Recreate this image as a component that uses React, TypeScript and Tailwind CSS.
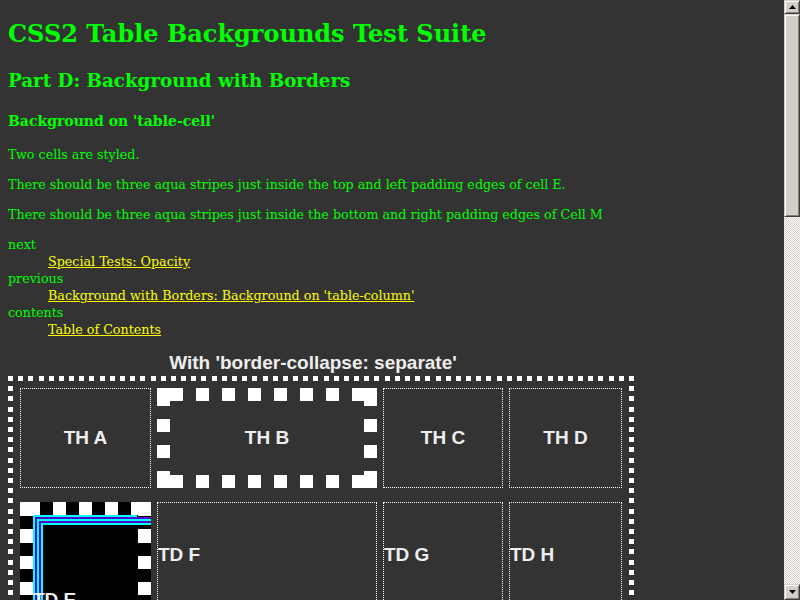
import React from "react";

const serif = "font-['DejaVu_Serif',serif]";
const sans = "font-['Liberation_Sans',Arial,sans-serif]";

// squares along the edges of the outer table border
function SquareDots({ w, h }: { w: number; h: number }) {
  const size = 5;
  const across = Math.round((w - size) / 10.2);
  const down = Math.ceil((h - size) / 10.2);
  const stepX = (w - size) / across;
  const rects: React.ReactNode[] = [];
  for (let i = 0; i <= across; i++) {
    const x = Math.round(i * stepX);
    rects.push(<rect key={`t${i}`} x={x} y={0} width={size} height={size} />);
    rects.push(<rect key={`b${i}`} x={x} y={h - size} width={size} height={size} />);
  }
  for (let j = 1; j < down; j++) {
    const y = Math.round(j * 10.2);
    rects.push(<rect key={`l${j}`} x={0} y={y} width={size} height={size} />);
    rects.push(<rect key={`r${j}`} x={w - size} y={y} width={size} height={size} />);
  }
  return (
    <svg className="absolute inset-0" width={w} height={h} fill="#fff" aria-hidden="true">
      {rects}
    </svg>
  );
}

// thick dashed white border of TH B
function DashedFrameB() {
  const xs = [39, 65, 91, 117, 143, 169];
  const ys = [31, 57];
  return (
    <svg className="absolute inset-0" width={220} height={100} fill="#fff" aria-hidden="true">
      <rect x={0} y={0} width={26} height={13} />
      <rect x={195} y={0} width={25} height={13} />
      <rect x={0} y={87} width={26} height={13} />
      <rect x={195} y={87} width={25} height={13} />
      <rect x={0} y={0} width={13} height={18} />
      <rect x={207} y={0} width={13} height={18} />
      <rect x={0} y={83} width={13} height={17} />
      <rect x={207} y={83} width={13} height={17} />
      {xs.map((x) => (
        <React.Fragment key={x}>
          <rect x={x} y={0} width={13} height={13} />
          <rect x={x} y={87} width={13} height={13} />
        </React.Fragment>
      ))}
      {ys.map((y) => (
        <React.Fragment key={y}>
          <rect x={0} y={y} width={13} height={13} />
          <rect x={207} y={y} width={13} height={13} />
        </React.Fragment>
      ))}
    </svg>
  );
}

// TD E: black dashes on white, black padding box, aqua stripes at top/left
function CellEDecor() {
  const h = 140;
  const cyan = "#00ffff";
  const blue = "#4a0ad2";
  return (
    <svg className="absolute inset-0" width={131} height={h} aria-hidden="true">
      <rect x={0} y={0} width={131} height={h} fill="#fff" />
      <rect x={13} y={13} width={105} height={h - 26} fill="#000" />
      {[20, 46, 72, 98].map((x) => (
        <React.Fragment key={x}>
          <rect x={x} y={0} width={13} height={13} fill="#000" />
          <rect x={x} y={h - 13} width={13} height={13} fill="#000" />
        </React.Fragment>
      ))}
      {[14, 41, 67, 93, 119].map((y) => (
        <React.Fragment key={y}>
          <rect x={0} y={y} width={13} height={13} fill="#000" />
          <rect x={118} y={y} width={13} height={13} fill="#000" />
        </React.Fragment>
      ))}
      <rect x={13} y={13} width={104} height={2} fill={cyan} />
      <rect x={13} y={13} width={2} height={h} fill={cyan} />
      <rect x={15} y={15} width={116} height={2} fill={blue} />
      <rect x={15} y={15} width={2} height={h} fill={blue} />
      <rect x={17} y={17} width={114} height={2} fill={cyan} />
      <rect x={17} y={17} width={2} height={h} fill={cyan} />
      <rect x={19} y={19} width={112} height={2} fill={blue} />
      <rect x={19} y={19} width={2} height={h} fill={blue} />
      <rect x={21} y={21} width={110} height={2} fill={cyan} />
      <rect x={21} y={21} width={2} height={h} fill={cyan} />
    </svg>
  );
}

function HeadCell({ label }: { label: string }) {
  return (
    <div className="flex items-center justify-center border border-dotted border-white">
      {label}
    </div>
  );
}

function DataCell({ label }: { label: string }) {
  return (
    <div className="border border-dotted border-white pt-[41px]">{label}</div>
  );
}

function ScrollButton({ up }: { up?: boolean }) {
  return (
    <div
      className={`flex items-center justify-center bg-[#d4d0c8] border border-t-[#d4d0c8] border-l-[#d4d0c8] border-r-[#404040] border-b-[#404040] shadow-[inset_1px_1px_#fff,inset_-1px_-1px_#808080] ${
        up ? "h-[14px]" : "h-[16px]"
      }`}
    >
      <svg width="7" height="4" viewBox="0 0 7 4" fill="#000">
        {up ? <path d="M3.5 0L7 4H0z" /> : <path d="M0 0h7L3.5 4z" />}
      </svg>
    </div>
  );
}

function Scrollbar() {
  return (
    <div className="flex h-screen w-4 shrink-0 flex-col">
      <ScrollButton up />
      <div className="h-[203px] bg-[#d4d0c8] border border-t-[#d4d0c8] border-l-[#d4d0c8] border-r-[#404040] border-b-[#404040] shadow-[inset_1px_1px_#fff,inset_-1px_-1px_#808080]" />
      <div className="flex-1 bg-[repeating-conic-gradient(#d4d0c8_0%_25%,#ffffff_0%_50%)] [background-size:2px_2px]" />
      <ScrollButton />
    </div>
  );
}

export default function App() {
  return (
    <div className="flex h-screen w-full overflow-hidden bg-[#333333]">
      <main className="flex-1 overflow-hidden px-2 text-[#00ff00]">
        <h1 className={`${serif} mt-[20px] text-[24px] font-bold leading-[28px]`}>
          CSS2 Table Backgrounds Test Suite
        </h1>
        <h2 className={`${serif} mt-[22px] text-[18.3px] font-bold leading-[22px]`}>
          Part D: Background with Borders
        </h2>
        <h3 className={`${serif} mt-[20px] text-[14px] font-bold leading-[18px]`}>
          Background on 'table-cell'
        </h3>

        <div className={`${serif} text-[12.7px] leading-[17px]`}>
          <p className="mt-[16px]">Two cells are styled.</p>
          <p className="mt-[13px]">
            There should be three aqua stripes just inside the top and left padding edges of cell E.
          </p>
          <p className="mt-[13px]">
            There should be three aqua stripes just inside the bottom and right padding edges of Cell M
          </p>
          <dl className="mt-[13px]">
            <dt>next</dt>
            <dd className="ml-10">
              <a href="#" className="text-[#ffff00] underline">Special Tests: Opacity</a>
            </dd>
            <dt>previous</dt>
            <dd className="ml-10">
              <a href="#" className="text-[#ffff00] underline">
                Background with Borders: Background on 'table-column'
              </a>
            </dd>
            <dt>contents</dt>
            <dd className="ml-10">
              <a href="#" className="text-[#ffff00] underline">Table of Contents</a>
            </dd>
          </dl>
        </div>

        <div className={`${sans} w-[626px] text-[19px] font-bold leading-[22px] text-[#eeeeee]`}>
          <div className="mt-[14px] pr-[16px] text-center">With 'border-collapse: separate'</div>
          <div className="relative mt-[2px] h-[290px] pl-[12px] pt-[12px]">
            <SquareDots w={626} h={290} />
            <div className="grid grid-cols-[131px_220px_120px_113px] grid-rows-[100px_140px] gap-x-[6px] gap-y-[14px]">
              <HeadCell label="TH A" />
              <div className="relative flex items-center justify-center">
                <DashedFrameB />
                <span className="relative">TH B</span>
              </div>
              <HeadCell label="TH C" />
              <HeadCell label="TH D" />
              <div className="relative pl-[13px] pt-[87px]">
                <CellEDecor />
                <span className="relative">TD E</span>
              </div>
              <DataCell label="TD F" />
              <DataCell label="TD G" />
              <DataCell label="TD H" />
            </div>
          </div>
        </div>
      </main>
      <Scrollbar />
    </div>
  );
}
